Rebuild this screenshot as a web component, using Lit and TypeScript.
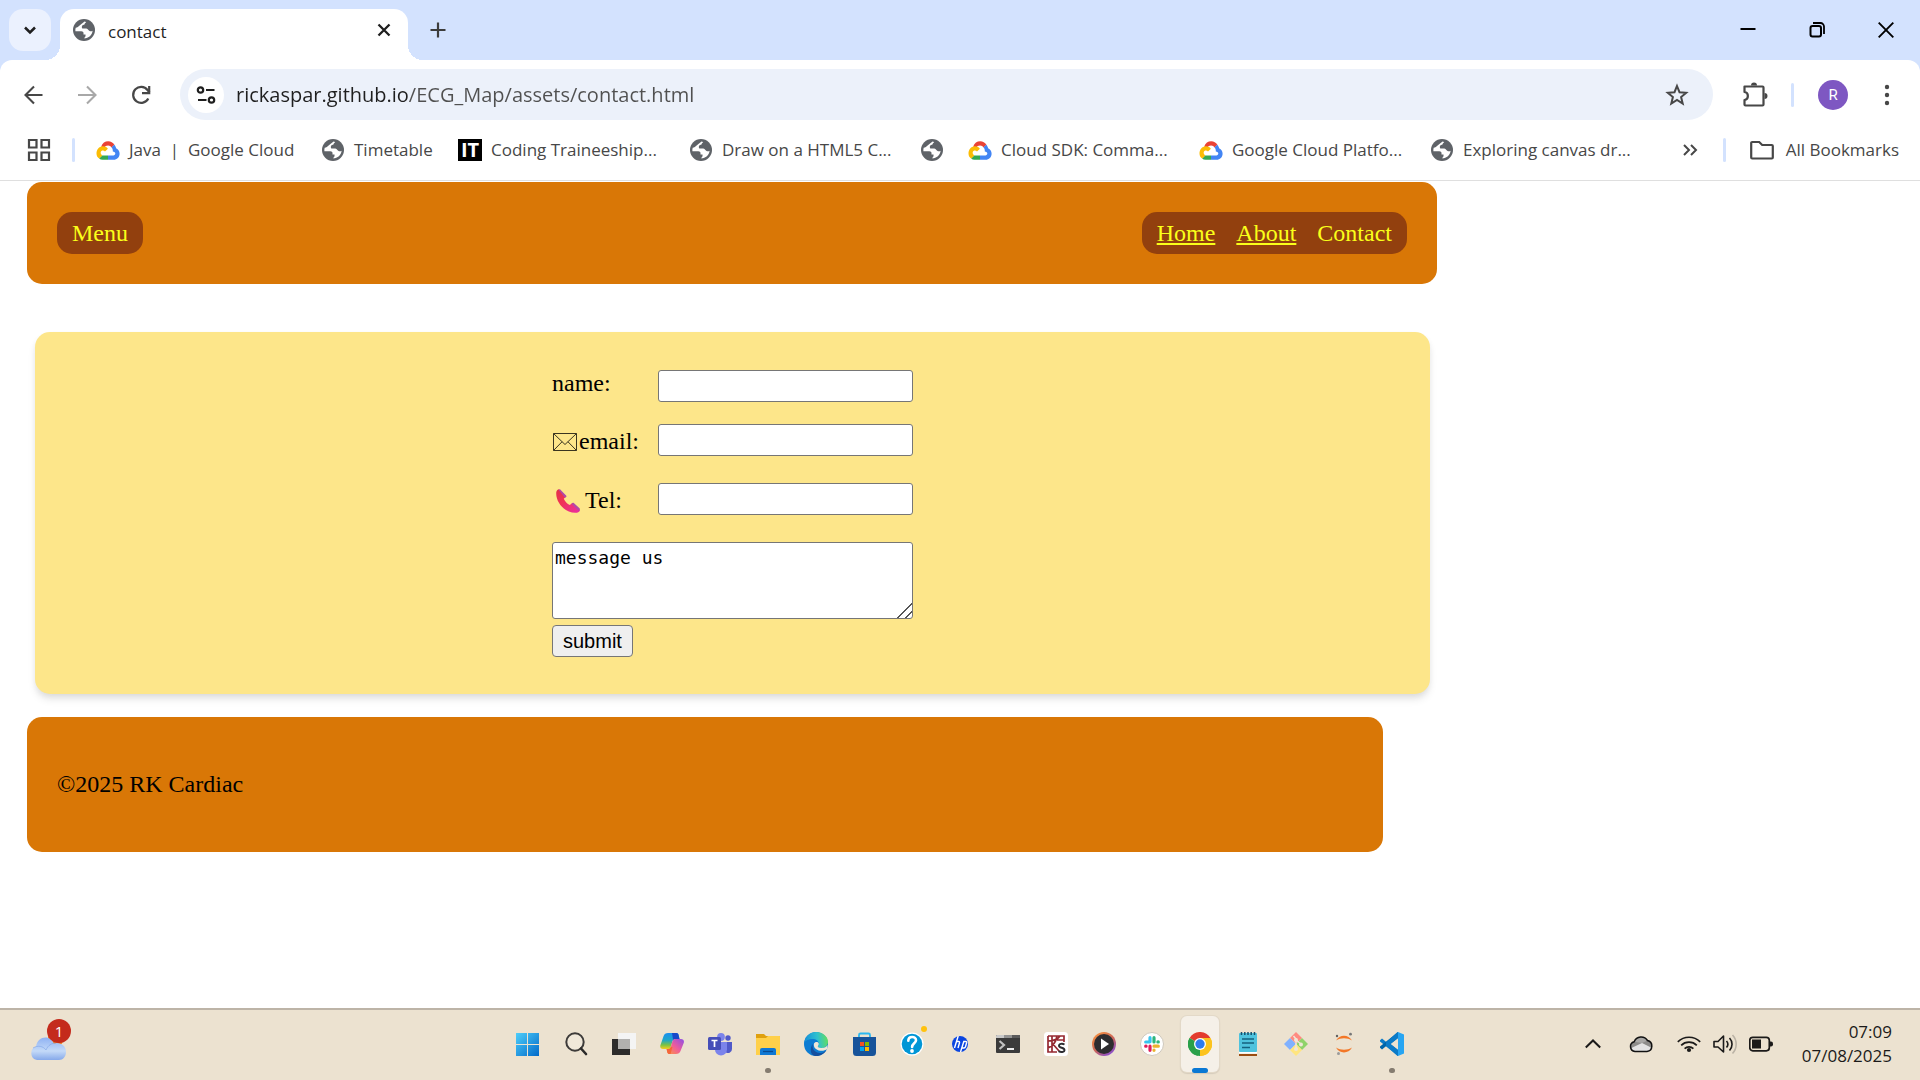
import { LitElement, html, css, svg, TemplateResult } from "lit";
import { customElement } from "lit/decorators.js";

type Glyph = TemplateResult;

const draw = (size: number, view: string, body: Glyph): Glyph =>
  html`<svg width=${size} height=${size} viewBox=${view} aria-hidden="true">${body}</svg>`;

const globe = draw(24, "0 0 24 24", svg`
  <circle cx="12" cy="12" r="11" fill="#5f6368"/>
  <path d="M12.6 3.6C10.8 5 9.2 6 7.6 7.4 6.4 8.6 5.4 9.3 3.7 9.8c-.4 1.2-.4 2.3-.3 3.4h5.9c1.3 0 2.2.7 2.2 1.9v1.3h2c.3 1.6-.3 2.9-1.7 3.9 4.6.2 8.4-3.2 8.8-7.6-1.1.7-2.3.7-3.4 0-1.3-.8-1.6-2.2-3.1-2.2h-3.8c-1.2-2 .1-3.8 2.2-4 .2-1 .7-1.7 1.7-2.3-.5-.3-1-.5-1.6-.6z" fill="#fff"/>`);

const cloud = draw(24, "0 0 24 24", svg`
  <path d="M5.2 8.6C6.4 5 9 3.2 12.2 3.2c2.6 0 4.8 1.3 6.2 3.6l-2.8 2.7c-.8-1.3-2-2-3.5-2-2.2 0-3.7 1.2-4.2 3.1z" fill="#ea4335"/>
  <path d="M18.3 6.7c1 1.1 1.5 2.2 1.8 3.6 2.3 1.1 3.5 2.9 3.5 5.5 0 3.4-2.6 6-6 6H12v-4.3h5.4c1.1 0 1.9-.8 1.9-1.9 0-1.2-.9-2-2.5-2.1.1-1.7-.2-2.9-1.3-4.2z" fill="#4285f4"/>
  <path d="M12 17.5v4.3H6.6c-1.4 0-2.5-.4-3.5-1.2l3-3.2z" fill="#34a853"/>
  <path d="M6.6 8.3c2-.1 3.9.7 5.3 2.4L9 13.600c-1-1.4-3.9-1.5-4.3.7-.3 1.5.7 2.3 1.5 3.1l-3 3.2C1.4 19.3.5 17.7.5 15.5c0-3.9 2.6-7 6.1-7.2z" fill="#fbbc04"/>`);

const itLogo = html`<span class="it-logo">IT</span>`;

interface Bookmark { icon: Glyph; text: string; size: string; }

const bookmarks: Bookmark[] = [
  { icon: cloud, text: "Java  |  Google Cloud", size: "wide" },
  { icon: globe, text: "Timetable", size: "short" },
  { icon: itLogo, text: "Coding Traineeship...", size: "full" },
  { icon: globe, text: "Draw on a HTML5 C...", size: "full" },
  { icon: globe, text: "", size: "bare" },
  { icon: cloud, text: "Cloud SDK: Comma...", size: "full" },
  { icon: cloud, text: "Google Cloud Platfo...", size: "full" },
  { icon: globe, text: "Exploring canvas dr...", size: "full" },
];

interface TaskApp { name: string; icon: Glyph; state?: string; }

const app = (body: Glyph) => draw(24, "0 0 24 24", body);

const apps: TaskApp[] = [
  { name: "Start", icon: app(svg`
    <defs><linearGradient id="win" gradientUnits="userSpaceOnUse" x1="0" y1="0" x2="24" y2="24"><stop offset="0" stop-color="#4fd0fb"/><stop offset="1" stop-color="#0067c8"/></linearGradient></defs>
    <path d="M0 1h11v11H0zM12 1h11v11H12zM0 13h11v11H0zM12 13h11v11H12z" fill="url(#win)"/>`) },
  { name: "Search", icon: app(svg`
    <circle cx="11" cy="10" r="8.7" fill="#f3ece0" fill-opacity=".6" stroke="#3d3b39" stroke-width="2"/>
    <path d="M17 16.5l5 5.5" stroke="#2b2a29" stroke-width="2.6" stroke-linecap="round"/>`) },
  { name: "Task view", icon: app(svg`
    <rect x="0" y="7" width="18" height="16" fill="#2d2c2b"/>
    <rect x="6" y="1" width="18" height="16" fill="#f4f4f4"/>
    <rect x="6" y="7" width="12" height="10" fill="#b1b0ae"/>`) },
  { name: "Copilot", icon: app(svg`
    <defs>
      <linearGradient id="cp1" x1="0" y1="0" x2="0" y2="1"><stop offset="0" stop-color="#1a8ff0"/><stop offset=".45" stop-color="#1fa7c8"/><stop offset=".75" stop-color="#7cc242"/><stop offset="1" stop-color="#f6cf1d"/></linearGradient>
      <linearGradient id="cp2" x1="1" y1="0" x2="0" y2="1"><stop offset="0" stop-color="#8c4fe8"/><stop offset=".5" stop-color="#ee5c9c"/><stop offset="1" stop-color="#ff9a3c"/></linearGradient>
    </defs>
    <path d="M8 1h8.500c1 0 1.800.8 2 1.800l1 4.200h-4c-1.500 0-2.500.8-3 2.200l-1.800 5.800c-.5 1.500-1.300 2-2.700 2H3c-2.200 0-3.200-1.600-2.600-3.700L3.600 4C4.200 2 5.800 1 8 1z" fill="url(#cp1)"/>
    <path d="M12 1h4.500c1 0 1.800.8 2 1.800l1 4.200h-4c-1 0-1.800.4-2.400 1.100z" fill="#1748c9"/>
    <path d="M16 22H9.500c-1 0-2-.8-2.200-1.800L6.600 17H8c1.400 0 2.200-.5 2.700-2l1.800-5.800C13 7.800 14 7 15.500 7H21c2.200 0 3.400 1.600 2.800 3.700L20.500 19c-.6 2-2.300 3-4.500 3z" fill="url(#cp2)"/>
    <path d="M6.600 17H8c1.400 0 2.200-.5 2.700-2h1.800l-2 7h-1c-1 0-2-.8-2.200-1.800z" fill="#f4673a"/>`) },
  { name: "Teams", icon: app(svg`
    <circle cx="20" cy="6" r="2.700" fill="#5059c9"/><circle cx="13" cy="5" r="3.900" fill="#7b83eb"/>
    <path d="M16 10h8v7a4 4 0 0 1-6 3.400z" fill="#5059c9"/>
    <path d="M7 10h12v7.500a6 6 0 0 1-12 0z" fill="#7b83eb"/>
    <rect x="0" y="5" width="13" height="13" rx="1.500" fill="#464eb8"/>
    <path d="M3.500 8.500h6M6.500 8.500V15" stroke="#fff" stroke-width="1.700"/>`) },
  { name: "File Explorer", state: "open", icon: app(svg`
    <path d="M0 2h8l2 2h13a1 1 0 0 1 1 1v3H0z" fill="#dfa00f"/>
    <path d="M0 6h10l2-2h11.500l.5.500V23H0z" fill="#ffd04a"/>
    <path d="M4 23v-5a2 2 0 0 1 2-2h12a2 2 0 0 1 2 2v5z" fill="#0f78d4"/>
    <path d="M7 19.500h10" stroke="#084a93" stroke-width="1.300"/>`) },
  { name: "Edge", icon: app(svg`
    <defs><linearGradient id="eg" x1="0" y1=".4" x2="1" y2=".3"><stop offset="0" stop-color="#1590d8"/><stop offset=".55" stop-color="#2fc0cf"/><stop offset="1" stop-color="#64e05a"/></linearGradient></defs>
    <circle cx="12" cy="12" r="12" fill="#0d7cd2"/>
    <path d="M.3 10.500C1.200 4.400 6 0 12 0c6.900 0 12 4.800 12 9.700 0 3.800-2.900 6.300-6.500 6.300-2.700 0-3.700-.8-3.700-1.400 0-.5 1-1 1-2.900C14.800 9 12 7 8.600 7 4.700 7 1.300 8.800.3 10.500z" fill="url(#eg)"/>
    <path d="M9 12c-1.800 5.300 3 9.600 8 8.900 2.200-.3 3.900-1.400 5.500-3-2.200 3.800-6.600 6.300-11 6.100C5.600 23.500 5.800 14.500 9 12z" fill="#144f9e"/>
    <path d="M10 11.500c.7-2 4.600-2.200 4.800.3 0 1.700-1 2.200-1 2.800 0 .8 1.600 1.500 4 1.400 2.400-.1 4.600-1.200 5.800-3.100l-.3 4.100c-2 1.400-4.300 2-7 1.700-4.600-.5-7.200-3.800-6.300-7.200z" fill="#efe7d7"/>`) },
  { name: "Microsoft Store", icon: app(svg`
    <path d="M7 6V3a1.500 1.500 0 0 1 1.500-1.500h8A1.500 1.500 0 0 1 18 3v3" fill="none" stroke="#2bb8f0" stroke-width="1.800"/>
    <path d="M1 5h23v15.500a3.500 3.500 0 0 1-3.500 3.500h-16A3.500 3.500 0 0 1 1 20.500z" fill="#17539a"/>
    <path d="M8 10h4v4H8z" fill="#f25022"/><path d="M13 10h4v4h-4z" fill="#7fba00"/><path d="M8 15h4v4H8z" fill="#00a4ef"/><path d="M13 15h4v4h-4z" fill="#ffb900"/>`) },
  { name: "Get Help", state: "alert", icon: app(svg`
    <circle cx="12" cy="12" r="11.500" fill="#fff"/><circle cx="12" cy="12" r="10.300" fill="#0096d6"/>
    <path d="M8.300 8.800c0-5 7.700-4.800 7.700-.6 0 3-3.900 3.200-3.900 6.800" fill="none" stroke="#fff" stroke-width="2.600" stroke-linecap="round"/><circle cx="12" cy="19" r="1.900" fill="#fff"/>`) },
  { name: "HP", icon: app(svg`
    <circle cx="12" cy="12" r="8" fill="#0a45e0"/>
    <path d="M10.200 4L6.500 16M8.500 9.500h2.200c.8 0 1 .4.800 1.200L10 16M12.500 20l3.300-10.500h2c.8 0 1 .4.800 1.200l-1.100 4c-.2.900-.7 1.300-1.500 1.300h-2" fill="none" stroke="#fff" stroke-width="1.400"/>`) },
  { name: "Terminal", icon: app(svg`
    <rect x="0" y="3" width="24" height="18" rx="1" fill="#3a3a3a"/><path d="M0 6V4a1 1 0 0 1 1-1h7v3z" fill="#c9c9c9"/><path d="M8 3h8v3H8z" fill="#929292"/><path d="M16 3h7a1 1 0 0 1 1 1v2h-8z" fill="#5b5b5b"/>
    <path d="M3.500 9l4.500 4-4.500 4" fill="none" stroke="#c2c2c2" stroke-width="2.200"/><path d="M11 17h7" stroke="#fff" stroke-width="1.800"/>`) },
  { name: "KS", icon: app(svg`
    <rect width="24" height="24" rx="3.500" fill="#fff"/>
    <path d="M4 4h16v6M4 4v16h9M8 4v16M4 9c6-.2 10-2 12-5M4 16c5-2 8-6 9-12M8 11l7 8M13 8h7" fill="none" stroke="#962a32" stroke-width="1.700"/>
    <path d="M20.500 12.500c-2-1.200-5.500-1-5.500 1.200 0 2.600 5.500 1.500 5.500 4.300 0 2.300-3.700 2.500-6 1.200" fill="none" stroke="#2c2c30" stroke-width="1.900"/>`) },
  { name: "Media Player", icon: app(svg`
    <defs><linearGradient id="mp" x1="0" y1="0" x2=".7" y2="1"><stop offset="0" stop-color="#ff9838"/><stop offset=".6" stop-color="#c9655d"/><stop offset="1" stop-color="#8a4fd0"/></linearGradient></defs>
    <circle cx="12" cy="12" r="12" fill="url(#mp)"/><circle cx="12" cy="12" r="10" fill="#2e2d30"/><path d="M9 6.500l8 5.500-8 5.500z" fill="#fff"/>`) },
  { name: "Slack", icon: app(svg`
    <circle cx="12" cy="12" r="11.500" fill="#fff" stroke="#cfc8bc"/>
    <g stroke-width="3.200" stroke-linecap="round"><path d="M10 5.700v4M6 10h.01M5.700 10h4" stroke="#36c5f0"/><path d="M14 5.700v4.300M18.300 9.900h-.4" stroke="#2eb67d"/><path d="M14 14.200h4.300M14 18v.3" stroke="#ecb22e"/><path d="M10 14.200v4.100M5.700 14.200h.4" stroke="#e01e5a"/></g>`) },
  { name: "Google Chrome", state: "active", icon: app(svg`
    <path d="M12 12L1.600 6A12 12 0 0 1 22.400 6z" fill="#e33b2e"/>
    <path d="M12 12L22.400 6A12 12 0 0 1 12 24z" fill="#fcc31e"/>
    <path d="M12 12v12A12 12 0 0 1 1.600 6z" fill="#2aa04a"/>
    <path d="M12 6h10.400A12 12 0 0 1 12 24l5.200-9z" fill="#fcc31e"/>
    <path d="M1.600 6l5.200 9L12 18l-2 5.800A12 12 0 0 1 1.600 6z" fill="#2aa04a"/>
    <circle cx="12" cy="12" r="6" fill="#fff"/><circle cx="12" cy="12" r="4.700" fill="#2f7bee"/>`) },
  { name: "Notepad", icon: app(svg`
    <rect x="3" y="1" width="18" height="19" rx="1" fill="#4fc3de"/><path d="M3 20h18v1.500H3z" fill="#fff"/><path d="M3 22h18v2H3z" fill="#9a4d12"/>
    <path d="M5.500 0v3M8.800 0v3M12 0v3M15.200 0v3M18.500 0v3" stroke="#17506c" stroke-width="1.500"/>
    <path d="M6 7h12M6 11h12M6 15.500h8" stroke="#14627f" stroke-width="1.500"/>`) },
  { name: "Git", icon: app(svg`
    <path d="M12 0l6 6-6 6-6-6z" fill="#ff8a80"/><path d="M6 6l6 6-6 6-6-6z" fill="#80b1ff"/><path d="M18 6l6 6-6 6-6-6z" fill="#8fd36a"/><path d="M12 12l6 6-6 6-6-6z" fill="#ffe57f"/>
    <path d="M9.500 4l2.500 3v11M12 8l5 4" fill="none" stroke="#efe7d7" stroke-width="1.500"/><circle cx="12" cy="8" r="2" fill="#efe7d7"/><circle cx="17" cy="12.500" r="2" fill="#efe7d7"/><circle cx="12" cy="17" r="2" fill="#efe7d7"/>`) },
  { name: "Jupyter", icon: app(svg`
    <path d="M4 8.500C7.500 2 16.500 2 20 8.500 15.500 5.500 8.500 5.500 4 8.500zM4 15.500c3.500 6.500 12.500 6.500 16 0-4.500 3-11.500 3-16 0z" fill="#f37726"/>
    <circle cx="5" cy="4" r="1.200" fill="#616262"/><circle cx="18.500" cy="2.200" r="1.400" fill="#767677"/><circle cx="6.500" cy="21.500" r="1.500" fill="#9a9a9a"/>`) },
  { name: "Visual Studio Code", state: "open", icon: app(svg`
    <path d="M0 8.200l2-1.700 16 13.300V24L0 9.500z" fill="#0b7bc8"/><path d="M0 15.700l2 1.800L18 4.300V0L0 14.500z" fill="#0065a9"/>
    <path d="M18 0l6 2.500v19L18 24z" fill="#27a5f2"/><path d="M18 0v6.500L11 12l7 5.500V24l-1-.5L6 13.500v-3L17 .5z" fill="#0b7bc8"/><path d="M18 6.500v11L11 12z" fill="#ebe2d0"/>`) },
];

@customElement("browser-bar")
export class BrowserBar extends LitElement {
  static styles = css`
    :host { display: block; font-family: "Open Sans", "Noto Sans", sans-serif; color: #474747; background: #d3e2fe; }
    * { box-sizing: border-box; }
    svg { display: block; flex: none; }
    button { border: 0; padding: 0; background: none; color: inherit; font: inherit; display: grid; place-items: center; flex: none; }
    .strip { display: flex; align-items: center; height: 60px; padding-left: 9px; }
    .search { width: 42px; height: 42px; border-radius: 14px; background: #ebf1fe; color: #1f1f1f; }
    .tab { position: relative; display: flex; align-items: center; align-self: flex-end; width: 348px; height: 51px; margin-left: 9px; padding: 0 12px 9px; border-radius: 14px 14px 0 0; background: #fff; color: #1f1f1f; font-size: 17px; line-height: 24px; }
    .tab::before, .tab::after { content: ""; position: absolute; bottom: 0; width: 15px; height: 15px; }
    .tab::before { right: 100%; background: radial-gradient(circle at 0 0, transparent 15px, #fff 15px); }
    .tab::after { left: 100%; background: radial-gradient(circle at 100% 0, transparent 15px, #fff 15px); }
    .title { flex: 1; padding: 4px 0 0 12px; }
    .new { width: 42px; height: 42px; margin-left: 9px; }
    .window { display: flex; margin-left: auto; color: #000; }
    .window button { width: 69px; height: 60px; }
    .tools { display: flex; align-items: center; height: 60px; padding: 9px 6px 0; background: #fff; border-radius: 12px 12px 0 0; }
    .tools > button { width: 54px; height: 51px; }
    .tools > .faded { color: #a8a8a8; }
    .address { flex: 1; display: flex; align-items: center; height: 51px; margin-left: 12px; padding: 0 24px 0 8px; border-radius: 26px; background: #ecf1fa; }
    .site { width: 36px; height: 36px; border-radius: 50%; background: #fff; color: #1f1f1f; }
    .url { flex: 1; min-width: 0; margin-left: 12px; padding: 0; border: 0; outline: 0; font: 20px/28px "Open Sans", "Noto Sans", sans-serif; color: transparent; background: linear-gradient(90deg, #1f1f1f 172px, #505050 172px); -webkit-background-clip: text; background-clip: text; }
    .rule { width: 3px; height: 24px; border-radius: 2px; background: #d3e2fe; flex: none; }
    .tools > .puzzle { margin-left: 14px; }
    .tools > .rule { margin: 0 12px 0 10px; }
    .avatar { display: grid; place-items: center; width: 30px; height: 30px; border-radius: 50%; background: #7e57c2; color: #fff; font: 15px/30px Roboto, sans-serif; }
    .marks { display: flex; align-items: center; height: 61px; padding: 0 21px 0 27px; border-bottom: 1px solid #dfdfdf; background: #fff; font-size: 17px; line-height: 24px; }
    .marks .first { margin: 0 21px; }
    .list { display: flex; gap: 24px; flex: 1; min-width: 0; overflow: hidden; }
    .mark { display: flex; align-items: center; gap: 9px; flex: none; min-height: 36px; color: inherit; text-decoration: none; white-space: pre; }
    .wide { width: 201px; } .short { width: 113px; } .full { width: 207px; } .bare { width: 24px; }
    .it-logo { width: 24px; height: 22px; flex: none; background: #000; color: #fff; text-align: center; font: bold 20px/22px "Open Sans", sans-serif; }
    .more { margin-right: 24px; }
    .all { display: flex; align-items: center; gap: 12px; margin-left: 24px; }
  `;

  render() {
    return html`
      <div class="strip">
        <button class="search" aria-label="Search tabs">${draw(16, "0 0 16 16", svg`<path d="M3 5.500l5 5 5-5" fill="none" stroke="currentColor" stroke-width="2.500"/>`)}</button>
        <div class="tab">
          ${globe}<span class="title">contact</span>
          <button aria-label="Close tab">${draw(24, "0 0 24 24", svg`<path d="M6.500 6.500l11 11M17.500 6.500l-11 11" stroke="currentColor" stroke-width="2.300"/>`)}</button>
        </div>
        <button class="new" aria-label="New tab">${draw(16, "0 0 16 16", svg`<path d="M8 0.500v15M.5 8h15" stroke="#3c3c3c" stroke-width="2.200"/>`)}</button>
        <div class="window">
          <button aria-label="Minimize">${draw(16, "0 0 16 16", svg`<path d="M.5 7h15" stroke="currentColor" stroke-width="2"/>`)}</button>
          <button aria-label="Restore">${draw(16, "0 0 16 16", svg`<rect x="1.500" y="4" width="10.500" height="10.500" rx="2" fill="none" stroke="currentColor" stroke-width="2"/><path d="M4 1h7.500A3.500 3.500 0 0 1 15 4.500V12" fill="none" stroke="currentColor" stroke-width="1.800"/>`)}</button>
          <button aria-label="Close">${draw(16, "0 0 16 16", svg`<path d="M.7.7l14.600 14.600M15.300.7L.7 15.300" stroke="currentColor" stroke-width="1.900"/>`)}</button>
        </div>
      </div>
      <div class="tools">
        <button aria-label="Back">${draw(24, "0 0 24 24", svg`<path d="M21.500 12H5M13 3.500L4.500 12l8.500 8.500" fill="none" stroke="currentColor" stroke-width="2.100"/>`)}</button>
        <button class="faded" aria-label="Forward">${draw(24, "0 0 24 24", svg`<path d="M3 12h17M12 3.500l8.500 8.500-8.500 8.500" fill="none" stroke="currentColor" stroke-width="2.100"/>`)}</button>
        <button aria-label="Reload">${draw(24, "0 0 24 24", svg`<path d="M19.300 15.500A8 8 0 1 1 18.500 7l2 2.500" fill="none" stroke="currentColor" stroke-width="2.200"/><path d="M20.200 3v7.200H13" fill="none" stroke="currentColor" stroke-width="2.200"/>`)}</button>
        <div class="address">
          <button class="site" aria-label="View site information">${draw(20, "0 0 20 20", svg`<g fill="none" stroke="currentColor" stroke-width="2.200"><circle cx="4.500" cy="5" r="2.700"/><path d="M10 5h8.500M2 15h8.500"/><circle cx="15.500" cy="15" r="2.700"/></g>`)}</button>
          <input class="url" type="text" aria-label="Address" .value=${"rickaspar.github.io/ECG_Map/assets/contact.html"}>
          <button aria-label="Bookmark this page">${draw(24, "0 0 24 24", svg`<path d="M12 3l2.500 6.200 6.700.5-5.100 4.300 1.600 6.600L12 17l-5.700 3.600L7.900 14 2.800 9.700l6.700-.5z" fill="none" stroke="currentColor" stroke-width="2"/>`)}</button>
        </div>
        <button class="puzzle" aria-label="Extensions">${draw(28, "0 0 28 28", svg`<path d="M4.500 5.500h18a1 1 0 0 1 1 1v17a1 1 0 0 1-1 1h-17a1 1 0 0 1-1-1v-4.500c4.500-.5 4.500-7.500 0-8z" fill="none" stroke="currentColor" stroke-width="2.200" stroke-linejoin="round"/><path d="M11 4.500a3 3 0 0 1 6 0zM24.500 12a3 3 0 0 1 0 6z" fill="currentColor"/>`)}</button>
        <span class="rule"></span>
        <button class="profile" aria-label="Profile"><span class="avatar">R</span></button>
        <button aria-label="Menu">${draw(24, "0 0 24 24", svg`<g fill="currentColor"><circle cx="12" cy="4" r="2.200"/><circle cx="12" cy="12" r="2.200"/><circle cx="12" cy="20" r="2.200"/></g>`)}</button>
      </div>
      <div class="marks">
        <button aria-label="Apps">${draw(24, "0 0 24 24", svg`<path d="M2 2h7.500v7.500H2zM14.500 2H22v7.500h-7.500zM2 14.500h7.500V22H2zM14.500 14.500H22V22h-7.500z" fill="none" stroke="currentColor" stroke-width="2.200"/>`)}</button>
        <span class="rule first"></span>
        <nav class="list">
          ${bookmarks.map((b) => html`<a class="mark ${b.size}" href="#" aria-label=${b.text || "Bookmark"}>${b.icon}${b.text ? html`<span>${b.text}</span>` : ""}</a>`)}
        </nav>
        <button class="more" aria-label="More bookmarks">${draw(18, "0 0 18 18", svg`<path d="M3 4l5 5-5 5M10 4l5 5-5 5" fill="none" stroke="currentColor" stroke-width="2"/>`)}</button>
        <span class="rule"></span>
        <a class="mark all" href="#">${draw(24, "0 0 24 24", svg`<path d="M1.200 5a1 1 0 0 1 1-1h7l3 3h9.600a1 1 0 0 1 1 1v11.500a1 1 0 0 1-1 1H2.200a1 1 0 0 1-1-1z" fill="none" stroke="currentColor" stroke-width="2.200"/>`)}<span>All Bookmarks</span></a>
      </div>`;
  }
}

@customElement("contact-page")
export class ContactPage extends LitElement {
  static styles = css`
    :host { display: block; padding: 1px 27px 0; background: #fff; color: #000; font: 24px/27px "Liberation Serif", "Times New Roman", serif; }
    * { box-sizing: border-box; }
    svg { flex: none; }
    .header { display: flex; justify-content: space-between; align-items: center; max-width: 1410px; padding: 30px; border-radius: 15px; background: #d97706; }
    .pill { display: flex; gap: 21px; padding: 8px 15px 7px; border: 0; border-radius: 15px; background: #92400e; color: #faff1a; font: inherit; }
    .pill a { color: inherit; }
    .card { display: flex; justify-content: center; max-width: 1395px; margin: 48px 8px 0; padding: 38px 38px 37px; border-radius: 15px; background: #fde68a; box-shadow: 0 6px 9px -1px rgba(0, 0, 0, .1), 0 3px 6px -1px rgba(0, 0, 0, .06); }
    .form { display: flex; flex-direction: column; width: 361px; }
    .row { display: grid; grid-template-columns: 106px 1fr; align-items: center; margin-bottom: 27px; }
    .row.top { align-items: start; margin-bottom: 22px; }
    .label { display: flex; align-items: center; gap: 2px; padding-top: 3px; }
    .top .label { padding-top: 0; }
    .label.tel { gap: 5px; padding-left: 4px; }
    .field { width: 100%; height: 32px; padding: 2px 3px; border: 1px solid #767676; border-radius: 3px; background: #fff; font: 20px "Liberation Sans", Arial, sans-serif; }
    .message { display: block; height: 77px; padding: 3px 2px; border: 1px solid #767676; border-radius: 3px; background: #fff; color: #000; font: 18px/24px "DejaVu Sans Mono", monospace; resize: both; }
    .message::-webkit-resizer { background: linear-gradient(135deg, transparent 48%, #555 48% 56%, transparent 56% 74%, #555 74% 82%, transparent 82%); }
    .submit { align-self: flex-start; height: 32px; margin-top: 6px; padding: 0 10px; border: 1px solid #767676; border-radius: 4px; background: #efefef; color: #000; font: 20px/28px "Liberation Sans", Arial, sans-serif; }
    .footer { max-width: 1356px; margin-top: 23px; padding: 54px 30px; border-radius: 15px; background: #d97706; }
    .footer p { margin: 0; }
  `;

  render() {
    return html`
      <header class="header">
        <button class="pill">Menu</button>
        <nav class="pill"><a href="#home">Home</a><a href="#about">About</a><span aria-current="page">Contact</span></nav>
      </header>
      <main class="card">
        <form class="form" @submit=${(e: Event) => e.preventDefault()}>
          <div class="row top">
            <label class="label" for="name">name:</label>
            <input class="field" id="name" type="text">
          </div>
          <div class="row">
            <label class="label" for="email">${draw(25, "0 0 25 25", svg`<g fill="none" stroke="#3a3520" stroke-width="1"><path d="M1.500 4.500h23v17h-23zM1.500 4.500l11.500 11 11.500-11M1.500 21.500L10 12.800M24.500 21.500L16 12.800"/></g>`)}email:</label>
            <input class="field" id="email" type="email">
          </div>
          <div class="row">
            <label class="label tel" for="tel">
              ${draw(24, "0 0 24 24", svg`<defs><linearGradient id="ph" x1="0" y1="0" x2="1" y2="1"><stop offset="0" stop-color="#e2304a"/><stop offset=".4" stop-color="#f03355"/><stop offset="1" stop-color="#ea2fa4"/></linearGradient></defs>
              <path d="M.3 3C.6 1.500 1.800.5 3 .3l6.500 6.500c.4.500.2 1-.2 1.400L7.800 9.700c1.300 2.800 3.300 5 6 6.400l1.900-1.700c.5-.4 1-.4 1.500 0l6.800 6.300c-.2 1.500-1.200 2.600-3 3C10 25-.8 14 .3 3z" fill="url(#ph)"/>
              <path d="M2.500.8L4 .2l6.300 6.500c.3.500.2.900-.2 1.300l-1 .8zM15.500 14.700l1-.8c.4-.3.900-.2 1.300.1l6 5.600-.5 2.700z" fill="#b04aa8"/>`)}
              Tel:</label>
            <input class="field" id="tel" type="tel">
          </div>
          <textarea class="message" aria-label="message us" .value=${"message us"}></textarea>
          <button class="submit" type="submit">submit</button>
        </form>
      </main>
      <footer class="footer"><p>©2025 RK Cardiac</p></footer>`;
  }
}

@customElement("task-bar")
export class TaskBar extends LitElement {
  static styles = css`
    :host { display: grid; grid-template-columns: 1fr auto 1fr; align-items: center; height: 72px; padding-bottom: 2px; border-top: 2px solid #bdb4a7; background: #ece2d0; color: #1b1a19; font: 17px/24px "Open Sans", "Noto Sans", sans-serif; box-sizing: border-box; }
    * { box-sizing: border-box; }
    svg { display: block; flex: none; }
    button { border: 0; padding: 0; background: none; color: inherit; font: inherit; display: grid; place-items: center; }
    .weather { position: relative; margin-left: 30px; padding-top: 10px; justify-self: start; }
    .count { position: absolute; left: 17px; top: -2px; width: 24px; height: 24px; border-radius: 50%; background: #c42b1c; color: #fff; font-size: 15px; text-align: center; }
    .apps { display: flex; }
    .app { position: relative; width: 48px; height: 68px; }
    .active::before { content: ""; position: absolute; inset: 6px 5px; border-radius: 6px; background: #f5f0e8; box-shadow: 0 0 0 1px #e3d9c8, 0 1px 1px 1px #d6ccbb; }
    .active svg { position: relative; }
    .open::after, .active::after { content: ""; position: absolute; bottom: 5px; width: 6px; height: 5px; border-radius: 3px; background: #857c70; }
    .active::after { width: 16px; background: #0a78d4; }
    .alert::after { content: ""; position: absolute; left: 33px; top: 16px; width: 6px; height: 6px; border-radius: 50%; background: #ffc20e; }
    .tray { display: flex; align-items: center; justify-content: flex-end; gap: 12px; padding-right: 28px; }
    .up { margin-right: 16px; }
    .onedrive { margin-right: 12px; }
    .clock { margin-left: 17px; text-align: right; }
    .clock time { display: block; }
  `;

  render() {
    return html`
      <button class="weather" aria-label="Weather">
        ${draw(36, "0 0 36 30", svg`
          <defs><linearGradient id="wc" x1="0" y1="0" x2="0" y2="1"><stop offset="0" stop-color="#8fb2f3"/><stop offset=".6" stop-color="#c4daf8"/><stop offset="1" stop-color="#86a9ea"/></linearGradient></defs>
          <circle cx="26" cy="4" r="8" fill="#f8760f"/>
          <path d="M7 26a7 7 0 0 1-1-13.500C7 6.500 11 3.500 15.500 3.500c4 0 7 2.300 8.200 6C30 7.500 36 11.500 36 18c0 4.500-3 8-7 8z" fill="url(#wc)"/>
          <path d="M3 14c5-3 10-2 13 2 2-5 6-7 10-7" fill="none" stroke="#7fa3e6" stroke-opacity=".6"/>`)}
        <span class="count">1</span>
      </button>
      <nav class="apps" aria-label="Applications">
        ${apps.map((a) => html`<button class="app ${a.state ?? ""}" aria-label=${a.name}>${a.icon}</button>`)}
      </nav>
      <div class="tray">
        <button class="up" aria-label="Show hidden icons">${draw(16, "0 0 16 16", svg`<path d="M.8 11.500L8 4.500l7.200 7" fill="none" stroke="currentColor" stroke-width="2"/>`)}</button>
        <button class="onedrive" aria-label="OneDrive">${draw(24, "0 0 24 24", svg`
          <path d="M6 19.500a5 5 0 0 1-.8-9.800A7.500 7.500 0 0 1 18.500 8.500 5.600 5.600 0 0 1 18 19.500z" fill="#8d8c8a"/>
          <path d="M6 19.500c-2.500 0-4-1.200-4.700-3L13 11l10 5c-.8 2-2.500 3.500-5 3.500z" fill="#e3e3e3"/>
          <path d="M5.200 9.700A7.500 7.500 0 0 1 18.500 8.500L13 11z" fill="#a9a8a6"/>
          <path d="M6 19.500a5 5 0 0 1-.8-9.800A7.500 7.500 0 0 1 18.500 8.500 5.600 5.600 0 0 1 18 19.500z" fill="none" stroke="#111" stroke-width="1.500"/>`)}</button>
        <button aria-label="Wi-Fi">${draw(24, "0 0 24 24", svg`<g fill="none" stroke="currentColor" stroke-width="1.700"><path d="M.8 9.800a16 16 0 0 1 22.400 0M4.200 13.300a11 11 0 0 1 15.600 0M7.600 16.700a6.300 6.300 0 0 1 8.800 0"/></g><circle cx="12" cy="18" r="2.100" fill="currentColor"/>`)}</button>
        <button aria-label="Volume">${draw(24, "0 0 24 24", svg`<g fill="none" stroke="currentColor" stroke-width="1.600"><path d="M1 9.500h4L10.500 4v16L5 15H1z" stroke-linejoin="round"/><path d="M13.500 9a5 5 0 0 1 0 6.500M16.500 6a9 9 0 0 1 0 12.500"/><path d="M19.500 3a13.500 13.500 0 0 1 0 18.500" stroke="#bbb3a6"/></g>`)}</button>
        <button aria-label="Battery">${draw(24, "0 0 24 24", svg`<rect x=".8" y="5.300" width="19.500" height="13.500" rx="3" fill="none" stroke="currentColor" stroke-width="1.700"/><rect x="3" y="7.500" width="9" height="9" fill="currentColor"/><path d="M20.500 9.500h1.500a2 2 0 0 1 2 2v1a2 2 0 0 1-2 2h-1.500z" fill="currentColor"/>`)}</button>
        <div class="clock"><time>07:09</time><time>07/08/2025</time></div>
      </div>`;
  }
}

@customElement("app-root")
export class AppRoot extends LitElement {
  static styles = css`
    :host { display: flex; flex-direction: column; min-height: 100vh; background: #fff; }
    .content { flex: 1; }
  `;

  render() {
    return html`<browser-bar></browser-bar><contact-page class="content"></contact-page><task-bar></task-bar>`;
  }
}
